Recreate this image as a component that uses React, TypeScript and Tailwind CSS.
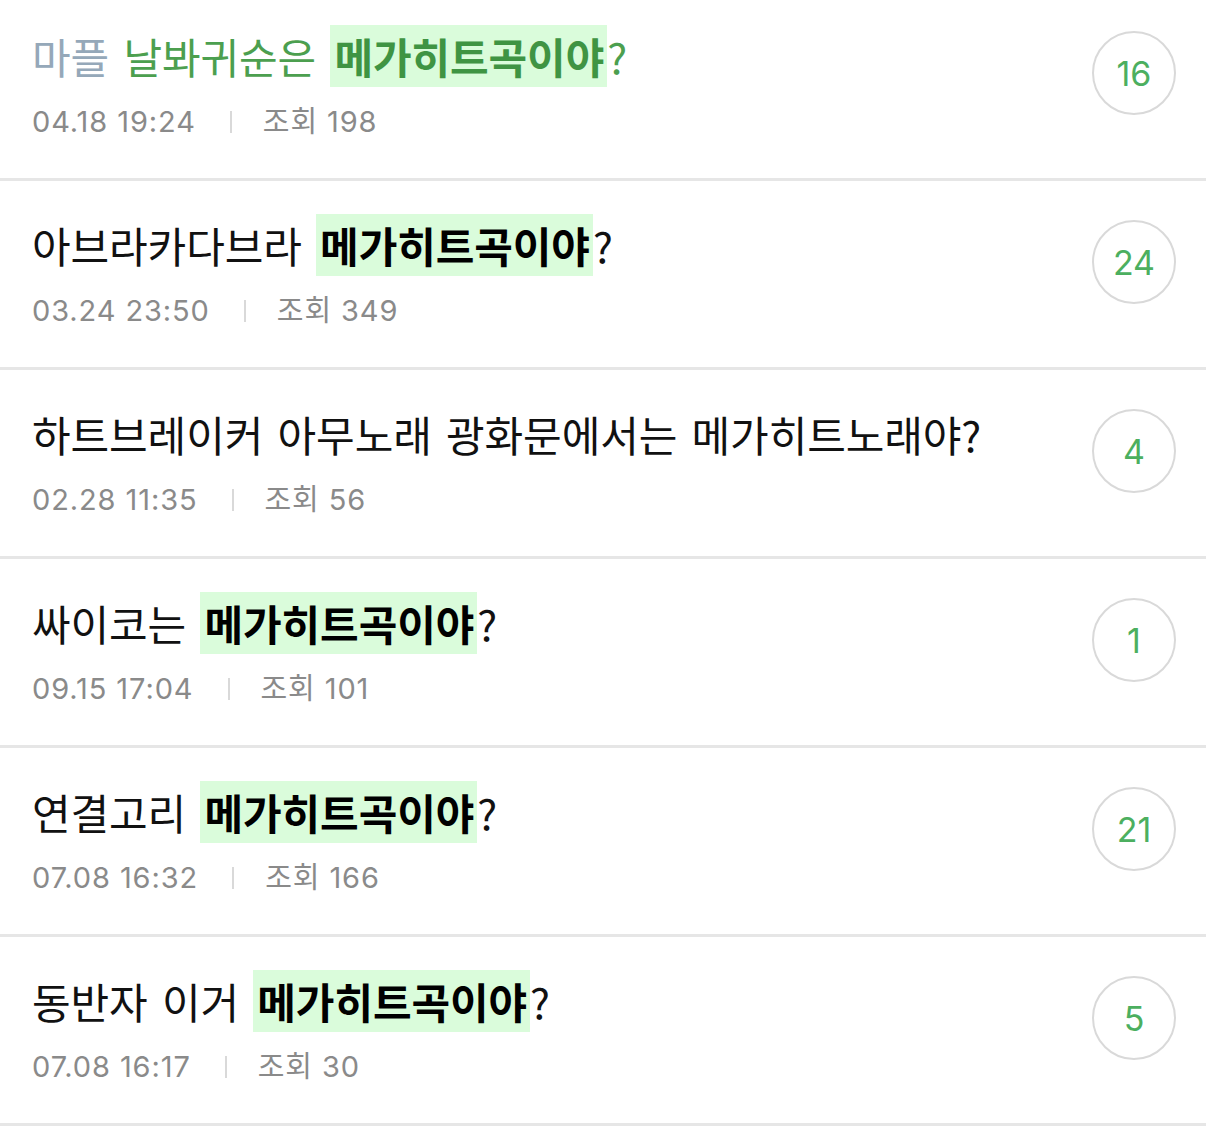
import React from "react";

type Item = {
  pre: React.ReactNode;
  hl?: string;
  post?: string;
  date: string;
  views: string;
  count: string;
  visited?: boolean;
};

const items: Item[] = [
  {
    pre: (
      <>
        <span className="text-[#95a8b9]">마플</span> <span className="text-[#4c9f4f]">날봐귀순은</span>{" "}
      </>
    ),
    hl: "메가히트곡이야",
    post: "?",
    date: "04.18 19:24",
    views: "198",
    count: "16",
    visited: true,
  },
  { pre: "아브라카다브라 ", hl: "메가히트곡이야", post: "?", date: "03.24 23:50", views: "349", count: "24" },
  { pre: "하트브레이커 아무노래 광화문에서는 메가히트노래야?", date: "02.28 11:35", views: "56", count: "4" },
  { pre: "싸이코는 ", hl: "메가히트곡이야", post: "?", date: "09.15 17:04", views: "101", count: "1" },
  { pre: "연결고리 ", hl: "메가히트곡이야", post: "?", date: "07.08 16:32", views: "166", count: "21" },
  { pre: "동반자 이거 ", hl: "메가히트곡이야", post: "?", date: "07.08 16:17", views: "30", count: "5" },
];

function Row({ item, first }: { item: Item; first: boolean }) {
  return (
    <div
      className={
        "flex items-start justify-between border-b-[3px] border-[#e6e6e6] pl-[32px] pr-[30px] pb-[38px] " +
        (first ? "pt-[25px]" : "pt-[33px]")
      }
    >
      <div className="flex flex-col">
        <div
          className={
            "h-[62px] whitespace-nowrap text-[42px] leading-[62px] tracking-[-0.1px] [word-spacing:5px] " +
            (item.visited ? "text-[#4c9f4f]" : "text-[#111111]")
          }
          style={{ fontFamily: '"Noto Sans CJK KR", "Noto Sans", sans-serif' }}
        >
          {item.pre}
          {item.hl && (
            <span
              className={
                "inline-block h-[62px] bg-[#dafcdb] pl-[4px] pr-[3px] font-bold leading-[62px] " +
                (item.visited ? "text-[#3f9443]" : "text-[#000000]")
              }
            >
              {item.hl}
            </span>
          )}
          {item.post}
        </div>
        <div
          className="mt-[17px] flex h-[36px] items-center text-[29px] leading-[36px] tracking-[0.9px] text-[#8a8a8a]"
          style={{ fontFamily: 'Inter, "Noto Sans CJK KR", sans-serif' }}
        >
          <span>{item.date}</span>
          <span className="ml-[34px] mr-[31px] h-[22px] w-[2px] bg-[#d9d9d9]" />
          <span>조회 {item.views}</span>
        </div>
      </div>
      <div
        className="mt-[6px] flex h-[84px] w-[84px] shrink-0 items-center justify-center rounded-full border-2 border-[#d9d9d9] text-[34px] text-[#4caf5f]"
        style={{ fontFamily: 'Inter, "Liberation Sans", sans-serif' }}
      >
        {item.count}
      </div>
    </div>
  );
}

export default function App() {
  return (
    <div className="w-[1206px] bg-white">
      {items.map((it, i) => (
        <Row key={i} item={it} first={i === 0} />
      ))}
    </div>
  );
}
